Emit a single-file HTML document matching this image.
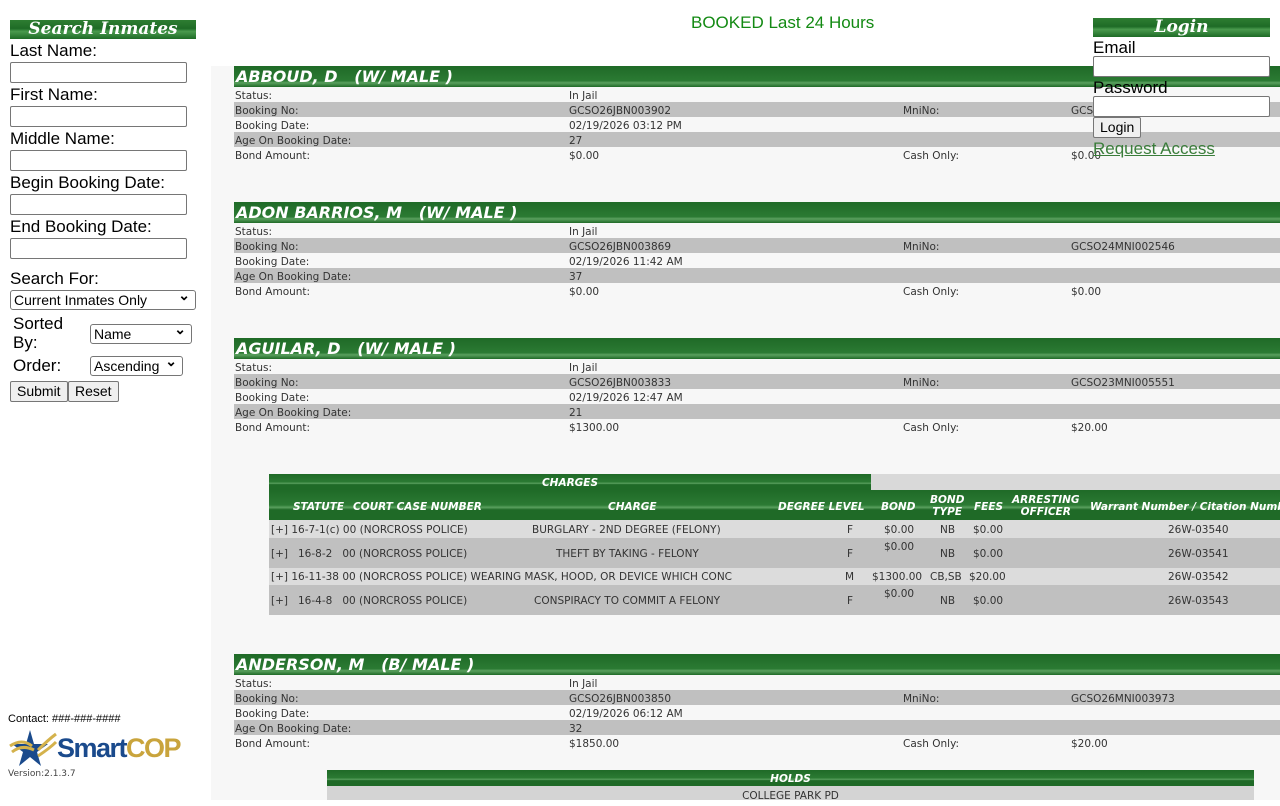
<!DOCTYPE html>
<html><head><style>
*{box-sizing:border-box}
body{margin:0;width:1280px;height:800px;overflow:hidden;background:#fff;font-family:"Liberation Sans",Arial,sans-serif;position:relative}
.a{position:absolute}
.side{left:0;top:0;width:211px;height:800px;background:#fff}
.gbar{background:linear-gradient(#2e7d32 0,#1e6b26 45%,#4a9a4e 60%,#1e6b26 100%);color:#fff;font-family:"DejaVu Serif","Liberation Serif",serif;font-weight:bold;font-style:italic;text-align:center}
.lbl{font-size:17px;color:#000;left:10px}
.inp{left:10px;width:177px;height:21px;border:1px solid #767676;border-radius:2px;background:#fff}
.sel{border:1px solid #767676;border-radius:3px;background:#fff;font-size:14px;padding:1px 3px;height:20px;line-height:16px}
.sel:after{content:"⌄";position:absolute;right:5px;top:-4px;font-weight:bold}
.btn{border:1px solid #767676;border-radius:2px;background:#efefef;font-size:14px;padding:0 6px;height:21px;line-height:19px}
.main{left:211px;top:66px;width:1069px;height:734px;background:#f7f7f7}
.hdr{left:234px;width:1046px;height:21px;background:linear-gradient(#1f6a27 0,#2b7a33 70%,#5aa05e 80%,#1f6a27 100%);color:#fff;font-family:"DejaVu Sans",Verdana,sans-serif;font-weight:bold;font-style:italic;font-size:16px;line-height:21px;padding-left:2px}
.row{left:234px;width:1046px;height:15px;font-family:"DejaVu Sans",Verdana,sans-serif;font-size:10.5px;color:#333;line-height:15px}
.row span{position:absolute;top:2px}
.g{background:#c0c0c0}
.th{background:linear-gradient(#1f6a27 0,#2b7a33 50%,#5aa05e 58%,#1f6a27 66%,#1f6a27 100%);color:#fff;font-family:"DejaVu Sans",Verdana,sans-serif;font-weight:bold;font-style:italic;font-size:10.5px;text-align:center}
.cr{left:269px;width:1011px;font-family:"DejaVu Sans",Verdana,sans-serif;font-size:10.5px;color:#333}
.cr span{position:absolute;white-space:nowrap}
</style></head><body>
<div class="a side"></div>
<div class="a gbar" style="left:10px;top:20px;width:186px;height:19px;font-size:17px;line-height:19px">Search Inmates</div>
<div class="a lbl" style="top:41px">Last Name:</div><div class="a inp" style="top:62px"></div>
<div class="a lbl" style="top:85px">First Name:</div><div class="a inp" style="top:106px"></div>
<div class="a lbl" style="top:129px">Middle Name:</div><div class="a inp" style="top:150px"></div>
<div class="a lbl" style="top:173px">Begin Booking Date:</div><div class="a inp" style="top:194px"></div>
<div class="a lbl" style="top:217px">End Booking Date:</div><div class="a inp" style="top:238px"></div>
<div class="a lbl" style="top:269px">Search For:</div>
<div class="a sel" style="left:10px;top:290px;width:186px">Current Inmates Only</div>
<div class="a lbl" style="left:13px;top:314px;line-height:19px">Sorted<br>By:</div>
<div class="a sel" style="left:90px;top:324px;width:102px">Name</div>
<div class="a lbl" style="left:13px;top:356px">Order:</div>
<div class="a sel" style="left:90px;top:356px;width:93px;padding-right:14px">Ascending</div>
<div class="a btn" style="left:10px;top:381px">Submit</div>
<div class="a btn" style="left:68px;top:381px">Reset</div>
<div class="a" style="left:8px;top:713px;font-size:11px">Contact: ###-###-####</div>
<svg class="a" style="left:8px;top:728px" width="50" height="40" viewBox="0 0 50 40"><polygon points="22,2 26,16 40,16 29,24 33,38 22,29 11,38 15,24 4,16 18,16" fill="#1a4a8c"/><path d="M2 18 Q14 10 24 18 M4 24 Q14 16 26 22" stroke="#d4b24c" stroke-width="3" fill="none"/><path d="M30 22 Q40 12 48 6 M30 28 Q42 20 48 14" stroke="#d4b24c" stroke-width="3" fill="none"/></svg>
<div class="a" style="left:57px;top:731px;font-size:27px;font-weight:bold;letter-spacing:-1.5px;line-height:34px;font-family:'Liberation Sans Narrow','Liberation Sans',sans-serif"><span style="color:#1a4a8c">Smart</span><span style="color:#c9a43c">COP</span></div>
<div class="a" style="left:8px;top:769px;font-size:9px;color:#444;font-family:'DejaVu Sans',sans-serif">Version:2.1.3.7</div>

<div class="a main"></div>
<div class="a" style="left:691px;top:13px;font-size:17px;color:#138a13">BOOKED Last 24 Hours</div>

<div class="a hdr" style="top:66px">ABBOUD, D &nbsp; (W/ MALE )</div>
<div class="a row" style="top:87px"><span style="left:1px">Status:</span><span style="left:335px">In Jail</span></div>
<div class="a row g" style="top:102px"><span style="left:1px">Booking No:</span><span style="left:335px">GCSO26JBN003902</span><span style="left:669px">MniNo:</span><span style="left:837px">GCSO</span></div>
<div class="a row" style="top:117px"><span style="left:1px">Booking Date:</span><span style="left:335px">02/19/2026 03:12 PM</span></div>
<div class="a row g" style="top:132px"><span style="left:1px">Age On Booking Date:</span><span style="left:335px">27</span></div>
<div class="a row" style="top:147px"><span style="left:1px">Bond Amount:</span><span style="left:335px">$0.00</span><span style="left:669px">Cash Only:</span><span style="left:837px">$0.00</span></div>

<div class="a hdr" style="top:202px">ADON BARRIOS, M &nbsp; (W/ MALE )</div>
<div class="a row" style="top:223px"><span style="left:1px">Status:</span><span style="left:335px">In Jail</span></div>
<div class="a row g" style="top:238px"><span style="left:1px">Booking No:</span><span style="left:335px">GCSO26JBN003869</span><span style="left:669px">MniNo:</span><span style="left:837px">GCSO24MNI002546</span></div>
<div class="a row" style="top:253px"><span style="left:1px">Booking Date:</span><span style="left:335px">02/19/2026 11:42 AM</span></div>
<div class="a row g" style="top:268px"><span style="left:1px">Age On Booking Date:</span><span style="left:335px">37</span></div>
<div class="a row" style="top:283px"><span style="left:1px">Bond Amount:</span><span style="left:335px">$0.00</span><span style="left:669px">Cash Only:</span><span style="left:837px">$0.00</span></div>

<div class="a hdr" style="top:338px">AGUILAR, D &nbsp; (W/ MALE )</div>
<div class="a row" style="top:359px"><span style="left:1px">Status:</span><span style="left:335px">In Jail</span></div>
<div class="a row g" style="top:374px"><span style="left:1px">Booking No:</span><span style="left:335px">GCSO26JBN003833</span><span style="left:669px">MniNo:</span><span style="left:837px">GCSO23MNI005551</span></div>
<div class="a row" style="top:389px"><span style="left:1px">Booking Date:</span><span style="left:335px">02/19/2026 12:47 AM</span></div>
<div class="a row g" style="top:404px"><span style="left:1px">Age On Booking Date:</span><span style="left:335px">21</span></div>
<div class="a row" style="top:419px"><span style="left:1px">Bond Amount:</span><span style="left:335px">$1300.00</span><span style="left:669px">Cash Only:</span><span style="left:837px">$20.00</span></div>

<div class="a" style="left:269px;top:474px;width:1011px;height:16px;background:#d9d9d9"></div>
<div class="a th" style="left:269px;top:474px;width:602px;height:16px;line-height:18px">CHARGES</div>
<div class="a th" style="left:269px;top:490px;width:1011px;height:30px"></div>
<div class="a cr" style="top:490px;height:30px;color:#fff;font-weight:bold;font-style:italic;font-size:10.5px">
<span style="left:24px;top:11px">STATUTE</span><span style="left:84px;top:11px">COURT CASE NUMBER</span><span style="left:339px;top:11px">CHARGE</span><span style="left:509px;top:11px">DEGREE LEVEL</span><span style="left:612px;top:11px">BOND</span><span style="left:661px;top:4px;text-align:center;line-height:12px">BOND<br>TYPE</span><span style="left:705px;top:11px">FEES</span><span style="left:743px;top:4px;text-align:center;line-height:12px">ARRESTING<br>OFFICER</span><span style="left:821px;top:11px">Warrant Number / Citation Number</span></div>
<div class="a cr" style="top:520px;height:18px;background:#dcdcdc"><span style="left:2px;top:4px">[+] 16-7-1(c) 00 (NORCROSS POLICE)</span><span style="left:263px;top:4px">BURGLARY - 2ND DEGREE (FELONY)</span><span style="left:578px;top:4px">F</span><span style="left:615px;top:4px">$0.00</span><span style="left:671px;top:4px">NB</span><span style="left:704px;top:4px">$0.00</span><span style="left:899px;top:4px">26W-03540</span></div>
<div class="a cr" style="top:538px;height:30px;background:#c0c0c0"><span style="left:2px;top:10px">[+] &nbsp; 16-8-2 &nbsp; 00 (NORCROSS POLICE)</span><span style="left:287px;top:10px">THEFT BY TAKING - FELONY</span><span style="left:578px;top:10px">F</span><span style="left:615px;top:3px">$0.00</span><span style="left:671px;top:10px">NB</span><span style="left:704px;top:10px">$0.00</span><span style="left:899px;top:10px">26W-03541</span></div>
<div class="a cr" style="top:568px;height:17px;background:#dcdcdc"><span style="left:2px;top:3px">[+] 16-11-38 00 (NORCROSS POLICE) WEARING MASK, HOOD, OR DEVICE WHICH CONC</span><span style="left:576px;top:3px">M</span><span style="left:603px;top:3px">$1300.00</span><span style="left:661px;top:3px">CB,SB</span><span style="left:700px;top:3px">$20.00</span><span style="left:899px;top:3px">26W-03542</span></div>
<div class="a cr" style="top:585px;height:30px;background:#c0c0c0"><span style="left:2px;top:10px">[+] &nbsp; 16-4-8 &nbsp; 00 (NORCROSS POLICE)</span><span style="left:265px;top:10px">CONSPIRACY TO COMMIT A FELONY</span><span style="left:578px;top:10px">F</span><span style="left:615px;top:3px">$0.00</span><span style="left:671px;top:10px">NB</span><span style="left:704px;top:10px">$0.00</span><span style="left:899px;top:10px">26W-03543</span></div>

<div class="a hdr" style="top:654px">ANDERSON, M &nbsp; (B/ MALE )</div>
<div class="a row" style="top:675px"><span style="left:1px">Status:</span><span style="left:335px">In Jail</span></div>
<div class="a row g" style="top:690px"><span style="left:1px">Booking No:</span><span style="left:335px">GCSO26JBN003850</span><span style="left:669px">MniNo:</span><span style="left:837px">GCSO26MNI003973</span></div>
<div class="a row" style="top:705px"><span style="left:1px">Booking Date:</span><span style="left:335px">02/19/2026 06:12 AM</span></div>
<div class="a row g" style="top:720px"><span style="left:1px">Age On Booking Date:</span><span style="left:335px">32</span></div>
<div class="a row" style="top:735px"><span style="left:1px">Bond Amount:</span><span style="left:335px">$1850.00</span><span style="left:669px">Cash Only:</span><span style="left:837px">$20.00</span></div>
<div class="a th" style="left:327px;top:770px;width:927px;height:16px;line-height:18px">HOLDS</div>
<div class="a" style="left:327px;top:786px;width:927px;height:14px;background:#d4d4d4;text-align:center;font-family:'DejaVu Sans',sans-serif;font-size:10.5px;color:#333;line-height:20px">COLLEGE PARK PD</div>

<div class="a gbar" style="left:1093px;top:18px;width:177px;height:19px;font-size:17px;line-height:19px">Login</div>
<div class="a" style="left:1093px;top:38px;font-size:17px">Email</div>
<div class="a inp" style="left:1093px;top:56px"></div>
<div class="a" style="left:1093px;top:78px;font-size:17px">Password</div>
<div class="a inp" style="left:1093px;top:96px"></div>
<div class="a btn" style="left:1093px;top:117px">Login</div>
<div class="a" style="left:1093px;top:139px;font-size:17px;color:#3a7d3a;text-decoration:underline">Request Access</div>
</body></html>
